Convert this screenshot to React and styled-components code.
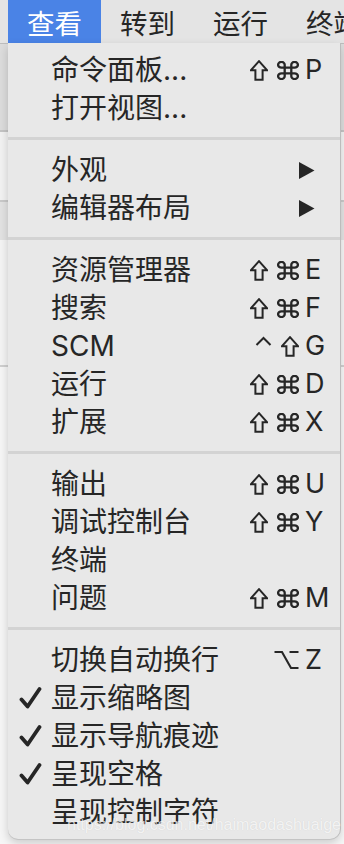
import React from "react";
import styled, { createGlobalStyle } from "styled-components";

const GlobalStyle = createGlobalStyle`
  html, body {
    margin: 0;
    padding: 0;
    background: #e6e6e6;
  }
  * {
    box-sizing: border-box;
  }
`;

const FONT = `"Inter", "Noto Sans CJK SC", sans-serif`;

const TITLES = ["查看", "转到", "运行", "终端"];

// one entry per row; "sep" draws a divider
const MENU = [
  { label: "命令面板...", mods: ["shift", "cmd"], key: "P" },
  { label: "打开视图..." },
  "sep",
  { label: "外观", submenu: true },
  { label: "编辑器布局", submenu: true },
  "sep",
  { label: "资源管理器", mods: ["shift", "cmd"], key: "E" },
  { label: "搜索", mods: ["shift", "cmd"], key: "F" },
  { label: "SCM", mods: ["ctrl", "shift"], key: "G" },
  { label: "运行", mods: ["shift", "cmd"], key: "D" },
  { label: "扩展", mods: ["shift", "cmd"], key: "X" },
  "sep",
  { label: "输出", mods: ["shift", "cmd"], key: "U" },
  { label: "调试控制台", mods: ["shift", "cmd"], key: "Y" },
  { label: "终端" },
  { label: "问题", mods: ["shift", "cmd"], key: "M" },
  "sep",
  { label: "切换自动换行", mods: ["opt"], key: "Z" },
  { label: "显示缩略图", checked: true },
  { label: "显示导航痕迹", checked: true },
  { label: "呈现空格", checked: true },
  { label: "呈现控制字符" },
];

const ShiftIcon = () => (
  <svg width="18" height="21" viewBox="0 0 18 21">
    <path
      d="M9 1.2 L17 10.2 H12.6 V19.8 H5.4 V10.2 H1 Z"
      fill="none"
      stroke="#262626"
      strokeWidth="2"
      strokeLinejoin="miter"
    />
  </svg>
);

const CmdIcon = () => (
  <svg width="22" height="19" viewBox="2 2 20 20" preserveAspectRatio="none">
    <path
      d="M15 6v12a3 3 0 1 0 3-3H6a3 3 0 1 0 3 3V6a3 3 0 1 0-3 3h12a3 3 0 1 0-3-3"
      fill="none"
      stroke="#262626"
      strokeWidth="2.3"
      vectorEffect="non-scaling-stroke"
    />
  </svg>
);

const CtrlIcon = () => (
  <svg width="17" height="20" viewBox="0 0 17 20">
    <polyline
      points="1.5,9 8.5,2 15.5,9"
      fill="none"
      stroke="#262626"
      strokeWidth="2"
    />
  </svg>
);

const OptIcon = () => (
  <svg width="25" height="20" viewBox="0 0 25 20">
    <path
      d="M0.5 2 H8 L17 18 H24.5 M15.5 2 H24.5"
      fill="none"
      stroke="#262626"
      strokeWidth="2.1"
    />
  </svg>
);

const CheckIcon = () => (
  <svg width="23" height="24" viewBox="0 0 23 24">
    <path
      d="M2.5 13.5 L8.6 20.5 L20.5 3"
      fill="none"
      stroke="#262626"
      strokeWidth="3.8"
      strokeLinecap="round"
      strokeLinejoin="round"
    />
  </svg>
);

const ArrowIcon = () => (
  <svg width="17" height="19" viewBox="0 0 17 19">
    <polygon points="1,1 16.5,9.5 1,18" fill="#262626" />
  </svg>
);

const MOD_ICONS = {
  shift: ShiftIcon,
  cmd: CmdIcon,
  ctrl: CtrlIcon,
  opt: OptIcon,
};

const App = () => {
  return (
    <>
      <GlobalStyle />
      <Page>
        <MenuBar>
          {TITLES.map((t, i) => (
            <MenuTitle key={t} $active={i === 0}>
              {t}
            </MenuTitle>
          ))}
        </MenuBar>
        <Body>
          <Dropdown>
            {MENU.map((item, i) =>
              item === "sep" ? (
                <Separator key={i} />
              ) : (
                <Item key={i}>
                  <CheckCell>{item.checked && <CheckIcon />}</CheckCell>
                  <Label>{item.label}</Label>
                  <Mods>
                    {item.mods &&
                      item.mods.map((m) => {
                        const Icon = MOD_ICONS[m];
                        return <Icon key={m} />;
                      })}
                  </Mods>
                  <Key>
                    {item.key}
                    {item.submenu && (
                      <SubArrow>
                        <ArrowIcon />
                      </SubArrow>
                    )}
                  </Key>
                </Item>
              )
            )}
          </Dropdown>
        </Body>
        <Watermark>https://blog.csdn.net/haimaodashuaige</Watermark>
      </Page>
    </>
  );
};

const Page = styled.div`
  position: relative;
  width: 344px;
  height: 844px;
  overflow: hidden;
  background: linear-gradient(
    to bottom,
    #dcdcdc 0,
    #dcdcdc 130px,
    #c4c4c4 130px,
    #c4c4c4 132px,
    #f2f2f2 132px,
    #f2f2f2 200px,
    #c9c9c9 200px,
    #c9c9c9 202px,
    #e2e2e2 202px,
    #e2e2e2 240px,
    #f4f4f4 240px,
    #f4f4f4 365px,
    #cfcfcf 365px,
    #cfcfcf 367px,
    #f6f6f6 367px
  );
  font-family: ${FONT};
`;

const MenuBar = styled.div`
  display: flex;
  height: 43px;
  padding-left: 8px;
  overflow: hidden;
  background: #e4e4e4;
  box-shadow: 0 1px 0 #bdbdbd;
`;

const MenuTitle = styled.div`
  display: flex;
  flex-shrink: 0;
  align-items: center;
  padding: 0 19px;
  white-space: nowrap;
  font-size: 27.5px;
  color: ${(p) => (p.$active ? "#ffffff" : "#262626")};
  background: ${(p) => (p.$active ? "#4a83e6" : "transparent")};
`;

const Body = styled.div`
  padding-left: 8px;
`;

const Dropdown = styled.div`
  position: relative;
  z-index: 1;
  width: 332px;
  padding: 8px 0;
  background: #e8e8e8;
  border-radius: 0 0 10px 10px;
  box-shadow: 1px 0 0 #bcbcbc, 0 1px 0 #c4c4c4, 0 4px 10px rgba(0, 0, 0, 0.18);
`;

const Item = styled.div`
  display: grid;
  grid-template-columns: 43px minmax(0, 1fr) 80px 38px;
  align-items: center;
  height: 38px;
  font-size: 28px;
  line-height: 38px;
  color: #262626;
`;

const CheckCell = styled.div`
  display: flex;
  align-items: center;
  padding-left: 11px;
  height: 38px;
`;

const Label = styled.div`
  white-space: nowrap;
  overflow: visible;
`;

const Mods = styled.div`
  display: flex;
  align-items: center;
  justify-content: flex-end;
  gap: 9px;
  padding-right: 3px;
  height: 38px;
`;

const Key = styled.div`
  display: flex;
  align-items: center;
  height: 38px;
  padding-left: 3px;
  font-size: 27px;
`;

const SubArrow = styled.span`
  display: flex;
  margin-left: -7px;
`;

const Separator = styled.div`
  height: 3px;
  margin: 10px 0 11px;
  background: #d3d3d3;
`;

const Watermark = styled.div`
  position: absolute;
  left: 67px;
  top: 816px;
  z-index: 2;
  font-family: "Liberation Sans", Arial, sans-serif;
  font-size: 16px;
  color: rgba(255, 255, 255, 0.75);
  text-shadow: 0 0 1px rgba(0, 0, 0, 0.12);
  white-space: nowrap;
`;

export default App;
